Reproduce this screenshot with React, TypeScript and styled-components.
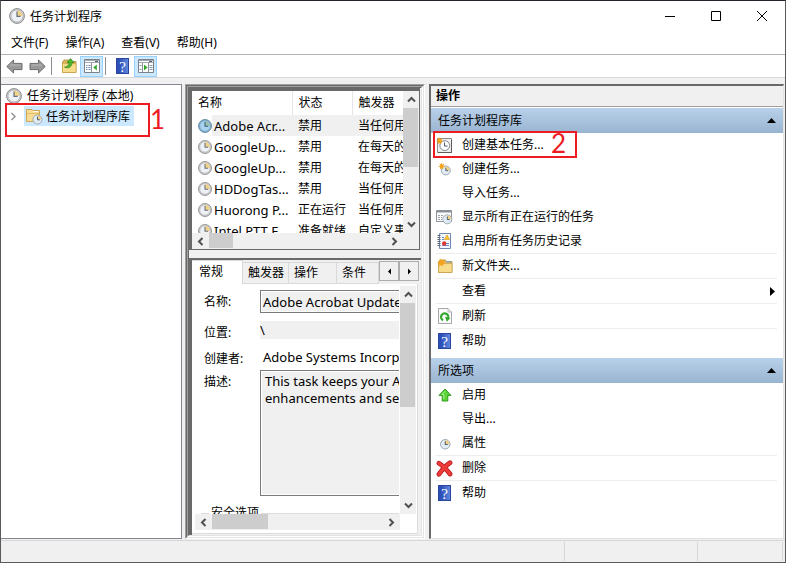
import React from 'react';
import styled, { createGlobalStyle, css } from 'styled-components';

const FONT = '"Noto Sans", "Noto Sans CJK SC", sans-serif';

const GlobalStyle = createGlobalStyle`
  *, *::before, *::after { box-sizing: border-box; }
  body { margin: 0; background: #fff; color: #000; font: 12px/16px ${FONT}; overflow: hidden; }
  button, input, textarea { font: inherit; color: inherit; margin: 0; }
  button { border: 0; padding: 0; background: none; }
`;

/* ---------- window ---------- */

const Window = styled.div`
  display: flex;
  flex-direction: column;
  height: 100vh;
  border: 1px solid #5a5a5a;
  border-top-color: #22232b;
  background: #f0f0f0;
`;

const TitleBar = styled.header`
  display: flex;
  align-items: center;
  height: 29px;
  flex: none;
  padding-left: 8px;
  background: #fff;
`;

const Title = styled.h1`
  flex: 1;
  margin: 0;
  padding: 2px 0 0 5px;
  font-size: 12px;
  font-weight: 400;
`;

const CaptionButton = styled.button`
  width: 46px;
  height: 29px;
  display: grid;
  place-items: center;
`;

const MenuBar = styled.nav`
  display: flex;
  align-items: center;
  height: 25px;
  flex: none;
  padding: 2px 0 0 10px;
  gap: 17px;
  background: #fff;
  border-bottom: 1px solid #b4b4b4;
`;

const ToolBar = styled.div`
  display: flex;
  align-items: center;
  height: 23px;
  flex: none;
  padding-left: 2px;
  background: #fff;
  border-bottom: 1px solid #d9d9d9;
`;

const ToolButton = styled.button<{ $on?: boolean }>`
  width: 23px;
  height: 21px;
  display: grid;
  place-items: center;
  ${(p) => p.$on && css`background: #cce8ff; border: 1px solid #99d1ff;`}
`;

const ToolDivider = styled.span`
  width: 1px;
  height: 18px;
  margin: 0 5px 0 2px;
  background: #8d8d8d;
`;

const Main = styled.main`
  flex: 1;
  min-height: 0;
  display: grid;
  grid-template-columns: 181px 240px minmax(0, 1fr);
  column-gap: 3px;
  padding: 6px 1px 1px 0;
`;

const StatusBar = styled.footer`
  display: flex;
  justify-content: flex-end;
  height: 22px;
  flex: none;
  padding: 1px 2px 1px 0;
  border-top: 1px solid #d7d7d7;
`;

const StatusCell = styled.span<{ $w: number }>`
  width: ${(p) => p.$w}px;
  border-left: 1px solid #d7d7d7;
  &:last-child { border-right: 1px solid #d7d7d7; }
`;

/* ---------- annotations ---------- */

const Callout = styled.span`
  position: absolute;
  border: 2px solid #ed1c24;
  pointer-events: none;
`;

const TreeCallout = styled(Callout)`
  left: 4px;
  top: 18px;
  width: 145px;
  height: 34px;
`;

const TaskCallout = styled(Callout)`
  left: -3px;
  top: -2px;
  width: 144px;
  height: 27px;
`;

const CalloutNumber = styled.span`
  position: absolute;
  color: #ed1c24;
  font-family: Lato, "Noto Sans", sans-serif;
  font-size: 26px;
  line-height: 26px;
`;

const TreeNumber = styled(CalloutNumber)`
  left: 149px;
  top: 21px;
`;

const TaskNumber = styled(CalloutNumber)`
  left: 115px;
  top: -3px;
`;

/* ---------- tree ---------- */

const TreePane = styled.section`
  position: relative;
  background: #fff;
  border: 1px solid #828790;
  border-left: 0;
  padding-top: 1px;
`;

const TreeRoot = styled.button`
  display: flex;
  align-items: center;
  gap: 5px;
  height: 20px;
  padding-left: 5px;
`;

const TreeChild = styled.div`
  display: flex;
  align-items: center;
  height: 20px;
  padding-left: 8px;
  gap: 6px;
`;

const TreeToggle = styled.button`
  display: grid;
  place-items: center;
  width: 9px;
  height: 20px;
`;

const TreeLabel = styled.button`
  display: flex;
  align-items: center;
  gap: 3px;
  height: 20px;
  padding: 1px 4px 0 2px;
  background: #cce8ff;
`;

/* ---------- middle ---------- */

const Bevel = styled.div`
  display: flex;
  flex-direction: column;
  min-height: 0;
  flex: 1;
  border: 1px solid #a0a0a0;
  border-right-color: #fff;
  border-bottom-color: #fff;
`;

const BevelDark = styled(Bevel)`
  border-top-color: #696969;
  border-left-color: #696969;
  border-right-color: #e3e3e3;
  border-bottom-color: #e3e3e3;
`;

const ListPane = styled.section`
  display: grid;
  grid-template-columns: minmax(0, 1fr) 16px;
  grid-template-rows: minmax(0, 1fr) 16px;
  height: 162px;
  flex: none;
  border: 1px solid #696969;
  border-width: 3px 1px 1px 3px;
  margin-right: 1px;
  background: #f0f0f0;
`;

const ListView = styled.div`
  overflow: hidden;
  background: #fff;
`;

const TaskTable = styled.table`
  border-collapse: collapse;
  table-layout: fixed;
  width: 280px;
  th, td {
    padding: 0 0 0 6px;
    font-weight: 400;
    text-align: left;
    white-space: nowrap;
  }
  th { height: 24px; border-right: 1px solid #e5e5e5; }
  td { height: 21px; }
`;

const Col = styled.col<{ $w: number }>`
  width: ${(p) => p.$w}px;
`;

const TaskRow = styled.tr<{ $on?: boolean }>`
  ${(p) => p.$on && css`background: linear-gradient(90deg, #fff 20px, #f0f0f0 20px);`}
`;

const TaskName = styled.span`
  display: flex;
  align-items: center;
  gap: 2px;
  font-size: 13px;
`;

const ScrollBar = styled.div<{ $row?: boolean }>`
  display: flex;
  flex-direction: ${(p) => (p.$row ? 'row' : 'column')};
  background: #f0f0f0;
`;

const ScrollButton = styled.button<{ $row?: boolean }>`
  display: grid;
  place-items: center;
  width: ${(p) => (p.$row ? 17 : 16)}px;
  height: ${(p) => (p.$row ? 16 : 17)}px;
  flex: none;
`;

const Track = styled.div<{ $row?: boolean }>`
  flex: 1;
  min-height: 0;
  min-width: 0;
  display: flex;
  flex-direction: ${(p) => (p.$row ? 'row' : 'column')};
`;

const Thumb = styled.span<{ $size: number; $row?: boolean }>`
  background: #cdcdcd;
  ${(p) => (p.$row ? css`width: ${p.$size}px; height: 15px;` : css`height: ${p.$size}px; width: 15px;`)}
`;

const DetailPane = styled.section`
  flex: 1;
  min-height: 0;
  display: flex;
  flex-direction: column;
  margin-top: 8px;
  border: 1px solid #696969;
  border-width: 2px 0 0 3px;
`;

const TabStrip = styled.div`
  display: flex;
  align-items: flex-end;
  height: 24px;
  flex: none;
`;

const Tab = styled.button<{ $w: number; $on?: boolean }>`
  width: ${(p) => p.$w}px;
  height: 22px;
  flex: none;
  text-align: left;
  padding-left: 5px;
  background: #f0f0f0;
  border-top: 1px solid #d9d9d9;
  border-right: 1px solid #d9d9d9;
  border-bottom: 1px solid #d9d9d9;
  ${(p) => p.$on && css`
    height: 24px;
    padding: 0 0 2px 7px;
    background: #fff;
    border-bottom: 0;
  `}
`;

const TabSpin = styled.button`
  display: grid;
  place-items: center;
  width: 20px;
  height: 20px;
  margin-bottom: 3px;
  background: #f0f0f0;
  border: 1px solid #adadad;
`;

const TabBody = styled.div`
  flex: 1;
  min-height: 0;
  display: grid;
  grid-template-columns: minmax(0, 1fr) 16px;
  grid-template-rows: minmax(0, 1fr) 16px;
  padding: 2px 1px 3px 3px;
  margin-right: 3px;
  margin-bottom: 1px;
  background: #fff;
  border-right: 1px solid #dcdcdc;
  border-bottom: 1px solid #dcdcdc;
`;

const FormView = styled.div`
  overflow: hidden;
  border-right: 1px solid #fff;
`;

const Form = styled.form`
  display: grid;
  grid-template-columns: 56px 300px;
  width: 366px;
  padding: 4px 0 0 9px;
`;

const FieldLabel = styled.label`
  padding-top: 4px;
`;

const Field = styled.input<{ $boxed?: boolean }>`
  height: 18px;
  margin-bottom: 8px;
  padding: 0;
  border: 0;
  outline: 0;
  font-size: 13px;
  background: #f0f0f0;
  ${(p) => p.$boxed && css`
    height: 23px;
    padding: 0 2px;
    border: 1px solid #7a7a7a;
    box-shadow: inset 0 0 0 1px #fff;
  `}
`;

const Creator = styled.output`
  height: 23px;
  padding: 2px 3px;
  font-size: 13px;
`;

const Description = styled.textarea`
  height: 126px;
  padding: 2px 4px;
  font-size: 13px;
  line-height: 17px;
  border: 1px solid #7a7a7a;
  box-shadow: inset 0 0 0 1px #fff;
  background: #f0f0f0;
  resize: none;
  outline: 0;
  overflow: hidden;
  white-space: pre;
`;

const Security = styled.fieldset`
  width: 360px;
  height: 60px;
  margin: 9px 0 0 6px;
  padding: 0;
  border: 1px solid #dcdcdc;
  legend { margin-left: 7px; padding: 0 2px; line-height: 16px; }
`;

/* ---------- actions ---------- */

const ActionsPane = styled.aside`
  margin-left: 1px;
  border: 2px solid #696969;
  border-width: 2px 1px 1px 2px;
  border-right-color: #e3e3e3;
  border-bottom-color: #e3e3e3;
  background: #fff;
`;

const PaneTitle = styled.h2`
  display: flex;
  align-items: center;
  height: 21px;
  margin: 0 0 1px;
  padding-left: 5px;
  font-size: 12px;
  font-weight: 700;
  background: #f0f0f0;
  border-bottom: 1px solid #a0a0a0;
`;

const GroupHeader = styled.button`
  display: flex;
  align-items: center;
  justify-content: space-between;
  width: 100%;
  height: 25px;
  padding: 0 7px;
  background: linear-gradient(#b9d1ea, #99b4d1);
`;

const ActionList = styled.ul`
  list-style: none;
  margin: 0 0 5px;
  padding: 0;
`;

const ActionItem = styled.li<{ $line?: boolean }>`
  position: relative;
  margin: 0 6px 0 5px;
  ${(p) => p.$line && css`border-bottom: 1px solid #ededed;`}
`;

const ActionButton = styled.button`
  display: flex;
  align-items: center;
  gap: 9px;
  width: 100%;
  height: 24px;
  text-align: left;
`;

const IconSlot = styled.span`
  display: grid;
  place-items: center;
  width: 17px;
  height: 17px;
`;

const ActionText = styled.span`
  flex: 1;
`;

/* ---------- icons ---------- */

const Clock = ({ size = 16, blue = false }: { size?: number; blue?: boolean }) => (
  <svg width={size} height={size} viewBox="0 0 16 16" aria-hidden="true">
    <circle cx="8" cy="8" r="7.4" fill={blue ? '#7fb0d3' : '#cfcfcf'} stroke={blue ? '#527892' : '#808080'} strokeWidth=".9" />
    <circle cx="8" cy="8" r="5.8" fill={blue ? '#a9d3ee' : '#eef1f5'} stroke={blue ? '#86b1cc' : '#b5b9be'} strokeWidth=".6" />
    <path d="M8 8V2.4A5.6 5.6 0 0 1 13.6 8Z" fill={blue ? '#9dbfae' : '#f1d28a'} />
    <path d="M8 3.4V8.3H11.6" fill="none" stroke={blue ? '#37607e' : '#66707e'} strokeWidth="1.2" />
  </svg>
);

const MiniClock = ({ x, y, s = 1 }: { x: number; y: number; s?: number }) => (
  <g transform={`translate(${x} ${y}) scale(${s})`}>
    <circle cx="5" cy="5" r="4.5" fill="#e3ecf4" stroke="#93a0ac" strokeWidth=".9" />
    <path d="M5 5V1.2A3.8 3.8 0 0 1 8.8 5Z" fill="#f3cf84" />
    <path d="M5 2.2V5.3H7.4" fill="none" stroke="#4b6179" />
  </g>
);

const Star = () => (
  <path d="M4 0 5 2.4 7.6 1.4 6.4 4 8.6 5.2 6 6 6.4 8.6 4.2 7 2 8.4 2.4 5.8 0 4.6 2.6 3.6 1.6 1.2 3.4 2.2Z" fill="#f5a21d" />
);

const FolderShape = () => (
  <>
    <path d="M1.5 4V14.5H15V3.5H9.5L8.5 2H3L1.5 4Z" fill="#dcb65c" stroke="#b48d3a" strokeWidth=".8" />
    <path d="M1.5 5.6H15V14.5H1.5Z" fill="#f7dc8c" stroke="#c39b45" strokeWidth=".6" />
  </>
);

const LibraryFolder = () => (
  <svg width="17" height="17" viewBox="0 0 17 17" aria-hidden="true">
    <path d="M.5 1.5H6L7 2.5H13.5V13.5H.5Z" fill="#f6dc94" stroke="#d0a751" />
    <path d="M1 5.5H13" stroke="#e3bd68" />
    <path d="M7.5 3.5H12.5" stroke="#fff" />
    <MiniClock x={6.5} y={6.5} />
  </svg>
);

const UpFolder = () => (
  <svg width="16" height="16" viewBox="0 0 16 16" aria-hidden="true">
    <FolderShape />
    <path d="M3.5 9C6.8 9 8 7 8 4.5H6L9.5.6 13 4.5H11C11 9 7.5 11 3.5 9Z" fill="#4db82e" stroke="#2d8519" strokeWidth=".7" />
  </svg>
);

const NewFolder = () => (
  <svg width="16" height="16" viewBox="0 0 16 16" aria-hidden="true">
    <FolderShape />
    <path d="M9.5 3.9H14" stroke="#7aa7d9" strokeWidth="1.2" />
    <Star />
  </svg>
);

const ArrowIcon = ({ left = false }: { left?: boolean }) => (
  <svg width="17" height="15" viewBox="0 0 17 15" aria-hidden="true">
    <path
      d={left ? 'M.8 7.5 7.5 1V4.4H16V10.6H7.5V14Z' : 'M16.2 7.5 9.5 1V4.4H1V10.6H9.5V14Z'}
      fill="#9a9a9a"
      stroke="#6c6c6c"
    />
    <path d={left ? 'M4 6H14.5' : 'M2.5 6H13'} stroke="#b9b9b9" />
  </svg>
);

const PaneIcon = ({ right = false }: { right?: boolean }) => (
  <svg width="16" height="14" viewBox="0 0 16 14" aria-hidden="true">
    <path d="M.5.5H15.5V13.5H.5Z" fill="#fff" stroke="#7b828c" />
    <path d="M1 1.5H15M1 3.5H15" stroke="#a2a9b3" />
    <path d="M11 2.5H14" stroke="#5c636d" />
    {right ? (
      <>
        <path d="M10.5 4V13M4.5 4V13" stroke="#8a929c" fill="none" />
        <path d="M11.5 6.5H14.5M11.5 8.5H14.5M11.5 10.5H14.5M1.5 6.5H3.5M1.5 10.5H3.5" stroke="#8796ab" />
        <path d="M6 5.5 9.5 8.5 6 11.5Z" fill="#2fa62b" />
      </>
    ) : (
      <>
        <path d="M7.5 4V13" stroke="#8a929c" />
        <path d="M2 6.5H3.5M4.5 6.5H6.5M2 8.5H3.5M4.5 8.5H6.5M2 10.5H3.5M4.5 10.5H6.5" stroke="#6e8db8" />
        <path d="M12.8 5.5 9.3 8.5 12.8 11.5Z" fill="#2fa62b" />
      </>
    )}
  </svg>
);

const HelpGlyph = styled.span`
  display: grid;
  place-items: center;
  width: 13px;
  height: 16px;
  color: #fff;
  font: 400 15px/16px "Liberation Serif", serif;
  background: linear-gradient(90deg, #2c4fb8 20%, #6088de);
  border: 1px solid #2a459b;
`;

const Help = () => <HelpGlyph aria-hidden="true">?</HelpGlyph>;

const BasicTaskIcon = () => (
  <svg width="17" height="17" viewBox="0 0 17 17" aria-hidden="true">
    <path d="M1.5 1.5H15.5V15.5H1.5Z" fill="#efefef" stroke="#8d8785" />
    <path d="M2 15.5H15.5V3" fill="none" stroke="#5f5a58" />
    <circle cx="8.8" cy="8.6" r="4.9" fill="#fff" stroke="#7e8790" />
    <path d="M8.5 5.4V9H11.6" fill="none" stroke="#4a5b70" />
    <g transform="scale(.85)"><Star /></g>
  </svg>
);

const CreateTaskIcon = () => (
  <svg width="16" height="16" viewBox="0 0 16 16" aria-hidden="true">
    <MiniClock x={3.8} y={4.4} />
    <g transform="translate(1.2 1.6) scale(.8)"><Star /></g>
  </svg>
);

const RunningIcon = () => (
  <svg width="17" height="16" viewBox="0 0 17 16" aria-hidden="true">
    <path d="M.5 1.5H15.5V12.5H.5Z" fill="#fff" stroke="#8d9299" />
    <path d="M1 2.5H15" stroke="#8b9198" strokeWidth="2" />
    <path d="M2 6.5H7M2 8.5H6M2 10.5H6" stroke="#9a9fa6" strokeDasharray="2 1" />
    <MiniClock x={6.3} y={5.3} />
  </svg>
);

const HistoryIcon = () => (
  <svg width="15" height="16" viewBox="0 0 15 16" aria-hidden="true">
    <path d="M2.5.5H13.5V15.5H2.5Z" fill="#f5f9ff" stroke="#6e87b4" />
    <path d="M.5 2.5H3.5M.5 4.5H3.5M.5 6.5H3.5M.5 8.5H3.5M.5 10.5H3.5M.5 12.5H3.5" stroke="#5c6470" />
    <path d="M5 4.5H7M5 6.5H7M5 10.5H12M5 12.5H12" stroke="#5f8ad0" />
    <path d="M10 1.8 12.8 6.5H7.2Z" fill="#f7c52c" stroke="#c98f13" strokeWidth=".5" />
    <circle cx="7.2" cy="10.5" r="2.2" fill="#dd3b2e" />
  </svg>
);

const RefreshIcon = () => (
  <svg width="14" height="16" viewBox="0 0 14 16" aria-hidden="true">
    <path d="M.5.5H10L13.5 4V15.5H.5Z" fill="#fbfbfb" stroke="#a3a7ac" />
    <path d="M10 .5V4H13.5" fill="#e4e6e9" stroke="#a3a7ac" strokeWidth=".7" />
    <path d="M5 12.2A3.6 3.6 0 1 1 9.9 10.6" fill="none" stroke="#34a82c" strokeWidth="2.2" />
    <path d="M7 8.8 12.4 10 8.8 13.8Z" fill="#34a82c" />
  </svg>
);

const EnableIcon = () => (
  <svg width="14" height="14" viewBox="0 0 14 14" aria-hidden="true">
    <path d="M7 1 13 7.4H9.8V13H4.2V7.4H1Z" fill="#5ad43a" stroke="#2f9a1d" />
    <path d="M7 3.2 4 6.5H5.8V11" fill="none" stroke="#a5f08d" />
  </svg>
);

const PropertiesIcon = () => (
  <svg width="16" height="16" viewBox="0 0 16 16" aria-hidden="true"><MiniClock x={3} y={4} s={1.05} /></svg>
);

const DeleteIcon = () => (
  <svg width="17" height="17" viewBox="0 0 17 17" aria-hidden="true">
    <path d="M3 3.2C6 5 11 10 14 14M14 2.8C10 5.5 6 10 3 14.2" fill="none" stroke="#b51a1a" strokeWidth="4.8" strokeLinecap="round" />
    <path d="M3 3.2C6 5 11 10 14 14M14 2.8C10 5.5 6 10 3 14.2" fill="none" stroke="#ea3a3a" strokeWidth="3.4" strokeLinecap="round" />
  </svg>
);

type Dir = 'up' | 'down' | 'left' | 'right';

const CHEVRONS: Record<Dir, string> = {
  up: 'M1 6.5 4.5 3 8 6.5',
  down: 'M1 2.5 4.5 6 8 2.5',
  left: 'M6.5 1 3 4.5 6.5 8',
  right: 'M2.5 1 6 4.5 2.5 8',
};

const Chevron = ({ dir, color = '#505050', width = 2 }: { dir: Dir; color?: string; width?: number }) => (
  <svg width="9" height="9" viewBox="0 0 9 9" aria-hidden="true">
    <path d={CHEVRONS[dir]} fill="none" stroke={color} strokeWidth={width} />
  </svg>
);

const TRIANGLES: Record<Dir, string> = {
  up: 'M0 7 4.5 2 9 7Z',
  down: 'M0 2H9L4.5 7Z',
  left: 'M6 1.5V7.5L3 4.5Z',
  right: 'M3 1.5V7.5L6 4.5Z',
};

const Triangle = ({ dir }: { dir: Dir }) => (
  <svg width="9" height="9" viewBox="0 0 9 9" aria-hidden="true"><path d={TRIANGLES[dir]} /></svg>
);

const SubmenuArrow = () => (
  <svg width="7" height="9" viewBox="0 0 7 9" aria-hidden="true"><path d="M0 0 5 4.5 0 9Z" /></svg>
);

/* ---------- parts ---------- */

interface ScrollProps { thumb: number; row?: boolean }

const Scroll = ({ thumb, row }: ScrollProps) => (
  <ScrollBar $row={row}>
    <ScrollButton $row={row} type="button" aria-label={row ? '向左滚动' : '向上滚动'}>
      <Chevron dir={row ? 'left' : 'up'} />
    </ScrollButton>
    <Track $row={row}><Thumb $size={thumb} $row={row} /></Track>
    <ScrollButton $row={row} type="button" aria-label={row ? '向右滚动' : '向下滚动'}>
      <Chevron dir={row ? 'right' : 'down'} />
    </ScrollButton>
  </ScrollBar>
);

const MENUS = ['文件(F)', '操作(A)', '查看(V)', '帮助(H)'];

const TASKS = [
  ['Adobe Acr...', '禁用', '当任何用户登录时'],
  ['GoogleUp...', '禁用', '在每天的 10:00'],
  ['GoogleUp...', '禁用', '在每天的 10:00'],
  ['HDDogTas...', '禁用', '当任何用户登录时'],
  ['Huorong P...', '正在运行', '当任何用户登录时'],
  ['Intel PTT E...', '准备就绪', '自定义事件'],
];

interface Action { text: string; icon?: React.ReactNode; line?: boolean; submenu?: boolean; marked?: boolean }

const LIBRARY_ACTIONS: Action[] = [
  { text: '创建基本任务...', icon: <BasicTaskIcon />, marked: true },
  { text: '创建任务...', icon: <CreateTaskIcon /> },
  { text: '导入任务...' },
  { text: '显示所有正在运行的任务', icon: <RunningIcon /> },
  { text: '启用所有任务历史记录', icon: <HistoryIcon />, line: true },
  { text: '新文件夹...', icon: <NewFolder />, line: true },
  { text: '查看', submenu: true, line: true },
  { text: '刷新', icon: <RefreshIcon />, line: true },
  { text: '帮助', icon: <Help /> },
];

const SELECTED_ACTIONS: Action[] = [
  { text: '启用', icon: <EnableIcon /> },
  { text: '导出...' },
  { text: '属性', icon: <PropertiesIcon />, line: true },
  { text: '删除', icon: <DeleteIcon />, line: true },
  { text: '帮助', icon: <Help /> },
];

const ActionGroup = ({ title, actions }: { title: string; actions: Action[] }) => (
  <>
    <GroupHeader type="button" aria-expanded="true">{title}<Triangle dir="up" /></GroupHeader>
    <ActionList>
      {actions.map((a) => (
        <ActionItem key={a.text} $line={a.line}>
          <ActionButton type="button">
            <IconSlot>{a.icon}</IconSlot>
            <ActionText>{a.text}</ActionText>
            {a.submenu && <SubmenuArrow />}
          </ActionButton>
          {a.marked && <><TaskCallout /><TaskNumber>2</TaskNumber></>}
        </ActionItem>
      ))}
    </ActionList>
  </>
);

export default function App() {
  return (
    <>
      <GlobalStyle />
      <Window>
        <TitleBar>
          <Clock size={16} />
          <Title>任务计划程序</Title>
          <CaptionButton type="button" aria-label="最小化">
            <svg width="10" height="10" viewBox="0 0 10 10"><path d="M0 5.5H10" stroke="#000" /></svg>
          </CaptionButton>
          <CaptionButton type="button" aria-label="最大化">
            <svg width="10" height="10" viewBox="0 0 10 10"><path d="M.5.5H9.5V9.5H.5Z" fill="none" stroke="#000" /></svg>
          </CaptionButton>
          <CaptionButton type="button" aria-label="关闭">
            <svg width="10" height="10" viewBox="0 0 10 10"><path d="M0 0 10 10M10 0 0 10" stroke="#000" /></svg>
          </CaptionButton>
        </TitleBar>

        <MenuBar>{MENUS.map((m) => <button type="button" key={m}>{m}</button>)}</MenuBar>

        <ToolBar>
          <ToolButton type="button" aria-label="后退"><ArrowIcon left /></ToolButton>
          <ToolButton type="button" aria-label="前进"><ArrowIcon /></ToolButton>
          <ToolDivider />
          <ToolButton type="button" aria-label="向上一级"><UpFolder /></ToolButton>
          <ToolButton type="button" aria-label="控制台树" $on><PaneIcon /></ToolButton>
          <ToolDivider />
          <ToolButton type="button" aria-label="帮助"><Help /></ToolButton>
          <ToolButton type="button" aria-label="操作窗格" $on><PaneIcon right /></ToolButton>
        </ToolBar>

        <Main>
          <TreePane>
            <TreeRoot type="button"><Clock size={16} />任务计划程序 (本地)</TreeRoot>
            <TreeChild>
              <TreeToggle type="button" aria-label="展开"><Chevron dir="right" color="#969696" width={1.5} /></TreeToggle>
              <TreeLabel type="button"><LibraryFolder />任务计划程序库</TreeLabel>
            </TreeChild>
            <TreeCallout />
            <TreeNumber>1</TreeNumber>
          </TreePane>

          <Bevel>
            <BevelDark>
              <Bevel>
                <BevelDark>
                  <ListPane>
                    <ListView>
                      <TaskTable>
                        <colgroup><Col $w={100} /><Col $w={60} /><Col $w={120} /></colgroup>
                        <thead><tr><th>名称</th><th>状态</th><th>触发器</th></tr></thead>
                        <tbody>
                          {TASKS.map(([name, state, trigger], i) => (
                            <TaskRow key={i} $on={i === 0}>
                              <td><TaskName><Clock size={14} blue={i === 0} />{name}</TaskName></td>
                              <td>{state}</td>
                              <td>{trigger}</td>
                            </TaskRow>
                          ))}
                        </tbody>
                      </TaskTable>
                    </ListView>
                    <Scroll thumb={59} />
                    <Scroll thumb={24} row />
                  </ListPane>

                  <DetailPane>
                    <TabStrip role="tablist">
                      <Tab type="button" role="tab" aria-selected="true" $w={51} $on>常规</Tab>
                      <Tab type="button" role="tab" $w={46}>触发器</Tab>
                      <Tab type="button" role="tab" $w={48}>操作</Tab>
                      <Tab type="button" role="tab" $w={42}>条件</Tab>
                      <TabSpin type="button" aria-label="上一个选项卡"><Triangle dir="left" /></TabSpin>
                      <TabSpin type="button" aria-label="下一个选项卡"><Triangle dir="right" /></TabSpin>
                    </TabStrip>
                    <TabBody>
                      <FormView>
                        <Form>
                          <FieldLabel htmlFor="name">名称:</FieldLabel>
                          <Field id="name" $boxed readOnly value="Adobe Acrobat Update Task" />
                          <FieldLabel htmlFor="location">位置:</FieldLabel>
                          <Field id="location" readOnly value="\" />
                          <FieldLabel htmlFor="creator">创建者:</FieldLabel>
                          <Creator id="creator">Adobe Systems Incorporated</Creator>
                          <FieldLabel htmlFor="description">描述:</FieldLabel>
                          <Description
                            id="description"
                            readOnly
                            value={'This task keeps your Adobe Reader\nenhancements and security fixes'}
                          />
                        </Form>
                        <Security><legend>安全选项</legend></Security>
                      </FormView>
                      <Scroll thumb={104} />
                      <Scroll thumb={56} row />
                    </TabBody>
                  </DetailPane>
                </BevelDark>
              </Bevel>
            </BevelDark>
          </Bevel>

          <ActionsPane>
            <PaneTitle>操作</PaneTitle>
            <ActionGroup title="任务计划程序库" actions={LIBRARY_ACTIONS} />
            <ActionGroup title="所选项" actions={SELECTED_ACTIONS} />
          </ActionsPane>
        </Main>

        <StatusBar>
          <StatusCell $w={133} />
          <StatusCell $w={86} />
        </StatusBar>
      </Window>
    </>
  );
}
